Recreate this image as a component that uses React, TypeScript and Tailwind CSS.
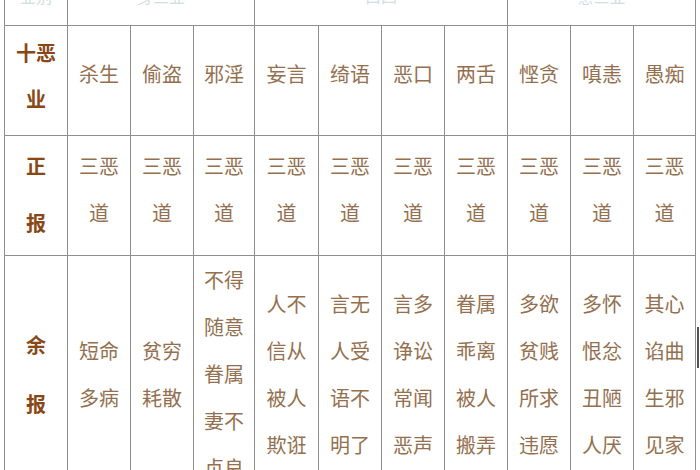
import React from 'react'

const cols = [63, 63, 63, 61, 64, 63, 63, 63, 63, 63, 62]

const karma = ['杀生', '偷盗', '邪淫', '妄言', '绮语', '恶口', '两舌', '悭贪', '嗔恚', '愚痴']

const remainder: string[][] = [
  ['短命', '多病'],
  ['贫穷', '耗散'],
  ['不得', '随意', '眷属', '妻不', '贞良'],
  ['人不', '信从', '被人', '欺诳'],
  ['言无', '人受', '语不', '明了'],
  ['言多', '诤讼', '常闻', '恶声'],
  ['眷属', '乖离', '被人', '搬弄'],
  ['多欲', '贫贱', '所求', '违愿'],
  ['多怀', '恨忿', '丑陋', '人厌'],
  ['其心', '谄曲', '生邪', '见家'],
]

const cell = 'border border-[#8e8e8e] text-center align-middle p-0'
const head = 'font-bold text-[#8a4716]'
const body = 'text-[#94704f]'
// top row is cut off by the window, only the bottom of its text shows
const top = 'border border-[#8e8e8e] text-center align-top p-0 pt-[19px] text-[16px] leading-[24px] text-[#d3dee2]'

function Lines({ lines }: { lines: string[] }) {
  return (
    <>
      {lines.map((l, i) => (
        <div key={i}>{l}</div>
      ))}
    </>
  )
}

export default function App() {
  return (
    <div
      className="relative w-[700px] h-[470px] overflow-hidden bg-white"
      style={{ fontFamily: '"Noto Sans CJK SC", "Noto Sans", sans-serif' }}
    >
      <table className="table-fixed border-collapse ml-[4px] mt-[-36px] w-[692px] text-[20px]">
        <colgroup>
          {cols.map((w, i) => (
            <col key={i} style={{ width: w }} />
          ))}
        </colgroup>
        <tbody>
          <tr className="h-[61px]">
            <td className={top}>业别</td>
            <td colSpan={3} className={top}>身三业</td>
            <td colSpan={4} className={top}>口四</td>
            <td colSpan={3} className={top}>意三业</td>
          </tr>

          <tr className="h-[110px]">
            <td className={`${cell} ${head} leading-[46px] pb-[10px]`}>
              <Lines lines={['十恶', '业']} />
            </td>
            {karma.map((k) => (
              <td key={k} className={`${cell} ${body} leading-[47px] pb-[14px]`}>
                {k}
              </td>
            ))}
          </tr>

          <tr className="h-[120px]">
            <td className={`${cell} ${head} leading-[57px] pb-[4px]`}>
              <Lines lines={['正', '报']} />
            </td>
            {karma.map((k) => (
              <td key={k} className={`${cell} ${body} leading-[47px] pb-[14px]`}>
                <Lines lines={['三恶', '道']} />
              </td>
            ))}
          </tr>

          <tr>
            <td className={`${cell} ${head} leading-[59px]`}>
              <Lines lines={['余', '报']} />
            </td>
            {remainder.map((r, i) => (
              <td key={i} className={`${cell} ${body} leading-[47px]`}>
                <Lines lines={r} />
              </td>
            ))}
          </tr>
        </tbody>
      </table>
      <div className="absolute right-[1px] top-[327px] w-[2px] h-[41px] bg-[#555]" />
    </div>
  )
}
